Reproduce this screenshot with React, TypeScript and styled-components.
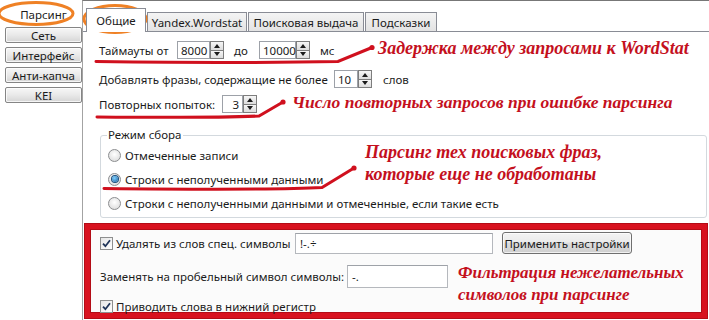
import React from "react";
import styled, { createGlobalStyle, css } from "styled-components";

const Global = createGlobalStyle`
  html, body { margin: 0; padding: 0; background: #ffffff; }
  * { box-sizing: border-box; }
`;

const Root = styled.div`
  position: relative;
  display: flex;
  width: 709px;
  height: 320px;
  overflow: hidden;
  background: #ffffff;
  font-family: "Noto Sans", "Open Sans", sans-serif;
  font-size: 11.5px;
  color: #1b1b1b;
`;

const Sidebar = styled.div`
  width: 82px;
  flex: none;
  display: flex;
  flex-direction: column;
  gap: 4px;
  padding: 6px 0 0 5px;
`;

const SideTab = styled.div<{ $active?: boolean }>`
  height: 16px;
  display: flex;
  align-items: center;
  justify-content: center;
  border: 1px solid #858585;
  border-radius: 2px;
  background: linear-gradient(#f7f7f7, #e9e9e9 50%, #d5d5d5);
  box-shadow: inset 0 0 0 1px rgba(255, 255, 255, 0.75);
  white-space: nowrap;
  ${(p) =>
    p.$active &&
    css`
      height: 17px;
      background: #ffffff;
      border-color: #ffffff;
      box-shadow: none;
    `}
`;

const Main = styled.div`
  flex: 1;
  min-width: 0;
  display: flex;
  flex-direction: column;
  border-left: 1px solid #a3a3a3;
  border-top: 1px solid #777777;
`;

const TabStrip = styled.div`
  height: 30px;
  flex: none;
  display: flex;
  align-items: flex-end;
  gap: 1px;
  padding-left: 3px;
`;

const Tab = styled.div<{ $active?: boolean; $w: number }>`
  width: ${(p) => p.$w}px;
  height: 19px;
  flex: none;
  display: flex;
  align-items: center;
  justify-content: center;
  border: 1px solid #898c95;
  border-bottom: none;
  background: linear-gradient(#f4f4f4, #e3e3e3);
  white-space: nowrap;
  ${(p) =>
    p.$active &&
    css`
      height: 24px;
      margin-bottom: -1px;
      background: #ffffff;
      position: relative;
      z-index: 1;
    `}
`;

const Panel = styled.div`
  flex: 1;
  display: flex;
  flex-direction: column;
  border-top: 1px solid #898c95;
  background: #ffffff;
  padding: 9px 2px 0 2px;
`;

const Row = styled.div<{ $mt?: number }>`
  display: flex;
  align-items: center;
  height: 18px;
  padding-left: 14px;
  margin-top: ${(p) => p.$mt ?? 0}px;
`;

const Text = styled.span<{ $w?: number; $pl?: number }>`
  flex: none;
  white-space: nowrap;
  ${(p) => (p.$w ? `width: ${p.$w}px;` : "")}
  padding-left: ${(p) => p.$pl ?? 0}px;
`;

const SpinBox = styled.div`
  display: flex;
  height: 18px;
  flex: none;
`;

const SpinInput = styled.div<{ $w: number; $right?: boolean }>`
  width: ${(p) => p.$w}px;
  height: 100%;
  border: 1px solid #9da1a8;
  background: #ffffff;
  display: flex;
  align-items: center;
  justify-content: ${(p) => (p.$right ? "flex-end" : "flex-start")};
  padding: 0 3px;
`;

const SpinButtons = styled.div`
  width: 14px;
  display: flex;
  flex-direction: column;
`;

const SpinBtn = styled.div<{ $down?: boolean }>`
  flex: 1;
  display: flex;
  align-items: center;
  justify-content: center;
  border: 1px solid #7d7d7d;
  background: linear-gradient(#f6f6f6, #dcdcdc);
  ${(p) => (p.$down ? "border-top: none;" : "")}
  &::after {
    content: "";
    border-left: 3.5px solid transparent;
    border-right: 3.5px solid transparent;
    ${(p) =>
      p.$down
        ? "border-top: 4px solid #1a1a1a;"
        : "border-bottom: 4px solid #1a1a1a;"}
  }
`;

const Annotation = styled.div<{ $ml?: number; $mt?: number; $size?: number }>`
  flex: none;
  font-family: "Liberation Serif", "DejaVu Serif", serif;
  font-style: italic;
  font-weight: bold;
  font-size: ${(p) => p.$size ?? 18}px;
  line-height: 22px;
  color: #c4101d;
  white-space: nowrap;
  margin-left: ${(p) => p.$ml ?? 0}px;
  margin-top: ${(p) => p.$mt ?? 0}px;
`;

const Fieldset = styled.fieldset`
  margin: 14px 0 0 15px;
  padding: 0 0 5px 7px;
  border: 1px solid #d3d9de;
  border-radius: 3px;
  min-width: 0;
`;

const Legend = styled.legend`
  padding: 0 2px 0 1px;
  margin-left: -1px;
  line-height: 16px;
`;

const FieldsetBody = styled.div`
  display: flex;
  margin-top: 3px;
`;

const RadioCol = styled.div`
  width: 257px;
  flex: none;
  display: flex;
  flex-direction: column;
  gap: 6px;
`;

const RadioRow = styled.div<{ $mt?: number }>`
  display: flex;
  align-items: center;
  gap: 4px;
  height: 18px;
  white-space: nowrap;
  margin-top: ${(p) => p.$mt ?? 0}px;
`;

const Radio = styled.span<{ $on?: boolean }>`
  width: 13px;
  height: 13px;
  flex: none;
  border-radius: 50%;
  border: 1px solid #8b8d8f;
  background: radial-gradient(circle at 50% 40%, #ffffff, #d6d6d6);
  display: flex;
  align-items: center;
  justify-content: center;
  ${(p) =>
    p.$on &&
    css`
      &::after {
        content: "";
        width: 6px;
        height: 6px;
        border-radius: 50%;
        background: radial-gradient(circle at 40% 35%, #7fd0ff, #1b5f9e);
        box-shadow: 0 0 0 1px #1c4f7d;
      }
    `}
`;

const RedBox = styled.div`
  margin-top: 6px;
  height: 94px;
  border: 5px solid #d8121f;
  box-shadow: inset 0 0 0 1px #b30c16, 0 0 0 1px #b30c16;
  background: #fbfbfb;
  padding: 3px 0 0 10px;
  display: flex;
  flex-direction: column;
`;

const BoxRow = styled.div<{ $h: number; $mt?: number }>`
  display: flex;
  align-items: center;
  height: ${(p) => p.$h}px;
  margin-top: ${(p) => p.$mt ?? 0}px;
  flex: none;
`;

const CheckLabel = styled.div<{ $w?: number }>`
  display: flex;
  align-items: center;
  gap: 3px;
  flex: none;
  white-space: nowrap;
  ${(p) => (p.$w ? `width: ${p.$w}px;` : "")}
`;

const CheckBox = styled.span`
  width: 13px;
  height: 13px;
  flex: none;
  border: 1px solid #8e8f8f;
  background: linear-gradient(135deg, #e6e6e6, #ffffff);
  display: flex;
  align-items: center;
  justify-content: center;
`;

const TextInput = styled.div<{ $w: number; $h: number }>`
  width: ${(p) => p.$w}px;
  height: ${(p) => p.$h}px;
  flex: none;
  border: 1px solid #b5b8bd;
  border-top-color: #9ea2a8;
  background: #ffffff;
  display: flex;
  align-items: center;
  padding: 0 4px;
`;

const Button = styled.div`
  width: 130px;
  height: 22px;
  margin-left: 9px;
  flex: none;
  display: flex;
  align-items: center;
  justify-content: center;
  border: 1px solid #6f6f6f;
  border-radius: 3px;
  background: linear-gradient(#f3f3f3, #ebebeb 45%, #dddddd 50%, #cfcfcf);
  box-shadow: inset 0 0 0 1px rgba(255, 255, 255, 0.7);
  white-space: nowrap;
`;

const Lower = styled.div`
  display: flex;
  margin-top: 11px;
`;

const LeftCol = styled.div`
  width: 348px;
  flex: none;
  display: flex;
  flex-direction: column;
`;

const Overlay = styled.svg`
  position: absolute;
  left: 0;
  top: 0;
  pointer-events: none;
`;

const Spinner = ({
  value,
  w,
  right,
}: {
  value: string;
  w: number;
  right?: boolean;
}) => (
  <SpinBox>
    <SpinInput $w={w} $right={right}>
      {value}
    </SpinInput>
    <SpinButtons>
      <SpinBtn />
      <SpinBtn $down />
    </SpinButtons>
  </SpinBox>
);

const Check = () => (
  <CheckBox>
    <svg width="9" height="9" viewBox="0 0 9 9">
      <path
        d="M1 4.6 L3.4 7.2 L8 1.2"
        fill="none"
        stroke="#1f3459"
        strokeWidth="1.8"
      />
    </svg>
  </CheckBox>
);

export default function App() {
  return (
    <Root>
      <Global />
      <Sidebar>
        <SideTab $active>Парсинг</SideTab>
        <SideTab>Сеть</SideTab>
        <SideTab>Интерфейс</SideTab>
        <SideTab>Анти-капча</SideTab>
        <SideTab>KEI</SideTab>
      </Sidebar>
      <Main>
        <TabStrip>
          <Tab $active $w={60}>
            Общие
          </Tab>
          <Tab $w={100}>Yandex.Wordstat</Tab>
          <Tab $w={116}>Поисковая выдача</Tab>
          <Tab $w={72}>Подсказки</Tab>
        </TabStrip>
        <Panel>
          <Row>
            <Text $w={78}>Таймауты от</Text>
            <Spinner value="8000" w={33} />
            <Text $w={35} $pl={10}>
              до
            </Text>
            <Spinner value="10000" w={37} />
            <Text $w={68} $pl={10}>
              мс
            </Text>
            <Annotation $mt={-4}>Задержка между запросами к WordStat</Annotation>
          </Row>
          <Row $mt={11}>
            <Text $w={235}>Добавлять фразы, содержащие не более</Text>
            <Spinner value="10" w={24} />
            <Text $pl={11}>слов</Text>
          </Row>
          <Row $mt={7}>
            <Text $w={123}>Повторных попыток:</Text>
            <Spinner value="3" w={21} right />
            <Annotation $ml={35} $mt={-4} $size={17.5}>
              Число повторных запросов при ошибке парсинга
            </Annotation>
          </Row>
          <Fieldset>
            <Legend>Режим сбора</Legend>
            <FieldsetBody>
              <RadioCol>
                <RadioRow>
                  <Radio />
                  Отмеченные записи
                </RadioRow>
                <RadioRow>
                  <Radio $on />
                  Строки с неполученными данными
                </RadioRow>
              </RadioCol>
              <Annotation $mt={-5}>
                Парсинг тех поисковых фраз,
                <br />
                которые еще не обработаны
              </Annotation>
            </FieldsetBody>
            <RadioRow $mt={6}>
              <Radio />
              Строки с неполученными данными и отмеченные, если такие есть
            </RadioRow>
          </Fieldset>
          <RedBox>
            <BoxRow $h={22}>
              <CheckLabel $w={195}>
                <Check />
                Удалять из слов спец. символы
              </CheckLabel>
              <TextInput $w={198} $h={21}>
                !-.÷
              </TextInput>
              <Button>Применить настройки</Button>
            </BoxRow>
            <Lower>
              <LeftCol>
                <BoxRow $h={23}>
                  <Text $w={247}>Заменять на пробельный символ символы:</Text>
                  <TextInput $w={101} $h={23}>
                    -.
                  </TextInput>
                </BoxRow>
                <BoxRow $h={16} $mt={10}>
                  <CheckLabel>
                    <Check />
                    Приводить слова в нижний регистр
                  </CheckLabel>
                </BoxRow>
              </LeftCol>
              <Annotation $ml={10} $mt={-3} $size={17}>
                Фильтрация нежелательных
                <br />
                символов при парсинге
              </Annotation>
            </Lower>
          </RedBox>
        </Panel>
      </Main>
      <Overlay width="709" height="320" viewBox="0 0 709 320">
        <g fill="none" stroke="#d0101e" strokeWidth="3" strokeLinecap="round">
          <path d="M96 61.5 C 180 62.5, 290 62.5, 338 61.5 L 372 47.5" />
          <path d="M97 117 C 160 117.5, 225 117.5, 259 116 L 283 102" />
          <path d="M104 188.5 C 200 189.5, 285 189.5, 322 187.5 L 354 168" />
        </g>
        <g fill="#d0101e">
          <circle cx="372" cy="47.5" r="2.6" />
          <circle cx="283" cy="102" r="2.6" />
          <circle cx="354" cy="168" r="2.6" />
        </g>
        <g fill="none" stroke="#ef8125" strokeWidth="3">
          <ellipse cx="36" cy="13.5" rx="37" ry="11" />
          <ellipse cx="115" cy="19" rx="31" ry="13.5" />
        </g>
      </Overlay>
    </Root>
  );
}
